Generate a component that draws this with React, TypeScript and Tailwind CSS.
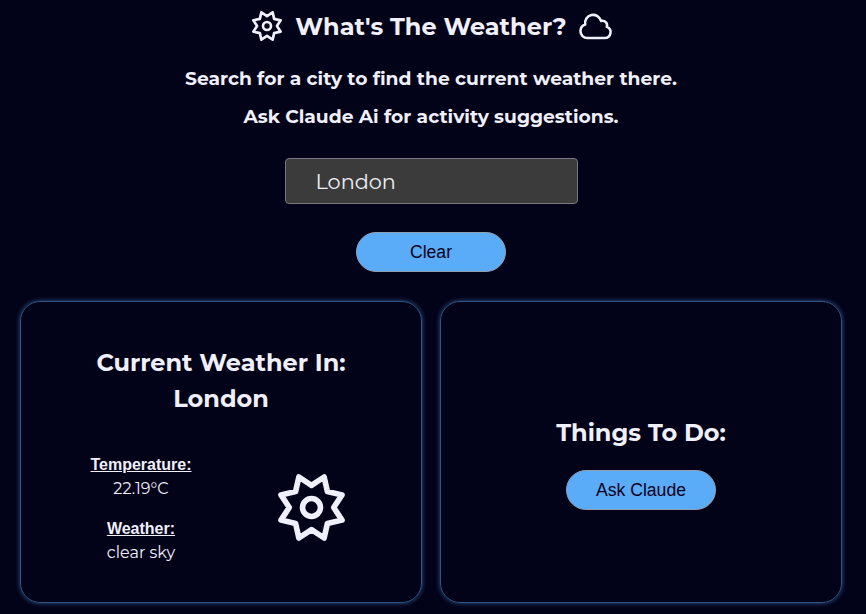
import type { ReactNode } from "react";

function SunIcon({ className }: { className: string }) {
  return (
    <svg viewBox="0 0 202 202" className={className} fill="none" stroke="currentColor" strokeLinejoin="round">
      <path d="M63 9L101 34L139 9L149 53L193 63L168 101L193 139L149 149L139 193L101 168L63 193L53 149L9 139L34 101L9 63L53 53Z" />
      <circle cx="101" cy="101" r="27" />
    </svg>
  );
}

function CloudIcon() {
  return (
    <svg viewBox="0 0 24 24" className="size-[37px] shrink-0" fill="none" stroke="currentColor" strokeWidth="1.65" strokeLinejoin="round">
      <path d="M2.25 15a4.5 4.5 0 0 0 4.5 4.5H18a3.75 3.75 0 0 0 1.332-7.257 3 3 0 0 0-3.758-3.848 5.25 5.25 0 0 0-10.233 2.33A4.502 4.502 0 0 0 2.25 15Z" />
    </svg>
  );
}

function PillButton({ children }: { children: ReactNode }) {
  return (
    <button className="h-10 w-[150px] rounded-full border border-[#8fa0b5] bg-[#5aabf8] font-['Liberation_Sans',Arial,sans-serif] text-[17.6px] text-[#03031c]">
      {children}
    </button>
  );
}

function Card({ children }: { children: ReactNode }) {
  return (
    <section className="flex h-[302px] w-[402px] flex-col items-center rounded-[20px] border border-[#2f5587] shadow-[0_0_5px_#31588a]">
      {children}
    </section>
  );
}

export default function App() {
  return (
    <main className="h-[614px] w-[866px] overflow-hidden bg-[#020218] pr-1 font-[Montserrat,Inter,sans-serif] text-[#f0f0fc]">
      <header className="flex flex-col items-center">
        <div className="flex h-[52px] items-center pl-1">
          <SunIcon className="mr-[13px] size-[30px] stroke-[18px]" />
          <h1 className="pt-0.5 text-2xl font-bold whitespace-nowrap">What's The Weather?</h1>
          <span className="ml-[10px]"><CloudIcon /></span>
        </div>
        <h3 className="mt-[13px] text-[18.7px] leading-7 font-bold whitespace-nowrap">Search for a city to find the current weather there.</h3>
        <h3 className="mt-[10px] text-[18.7px] leading-7 font-bold whitespace-nowrap">Ask Claude Ai for activity suggestions.</h3>
        <input
          aria-label="City"
          defaultValue="London"
          className="mt-[27px] h-[46px] w-[293px] rounded-[4px] border border-[#77777d] bg-[#3b3b3b] px-[30px] text-[20.8px] text-[#f0f0f5]"
        />
        <div className="mt-7 h-10"><PillButton>Clear</PillButton></div>
      </header>
      <div className="mt-[29px] flex justify-center gap-[18px]">
        <Card>
          <h2 className="mt-[43px] text-center text-2xl leading-9 font-bold">Current Weather In:<br />London</h2>
          <div className="mt-9 flex w-full">
            <dl className="ml-[50px] w-[140px] text-center text-base leading-6">
              <dt className="font-['Liberation_Sans',Arial,sans-serif] font-bold underline">Temperature:</dt>
              <dd>22.19°C</dd>
              <dt className="mt-4 font-['Liberation_Sans',Arial,sans-serif] font-bold underline">Weather:</dt>
              <dd>clear sky</dd>
            </dl>
            <SunIcon className="mt-[21px] ml-[67px] size-[67px] stroke-[17px]" />
          </div>
        </Card>
        <Card>
          <h2 className="mt-[113px] text-2xl leading-9 font-bold">Things To Do:</h2>
          <div className="mt-[19px]"><PillButton>Ask Claude</PillButton></div>
        </Card>
      </div>
    </main>
  );
}
